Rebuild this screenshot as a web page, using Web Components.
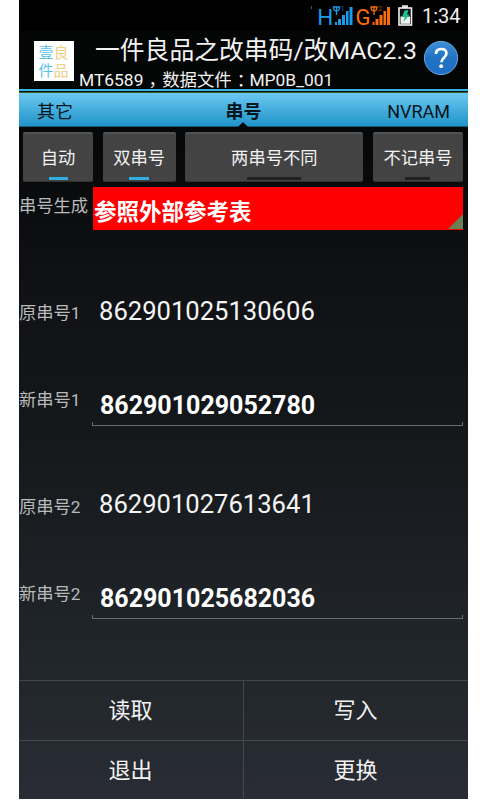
<!DOCTYPE html>
<html lang="zh-CN">
<head>
<meta charset="utf-8">
<title>一件良品之改串码</title>
<style>
html,body{margin:0;background:#fff}
body{width:480px;height:800px;overflow:hidden;font-family:Roboto,"Noto Sans CJK SC",sans-serif;color:#f2f2f2}
</style>
</head>
<body>
<phone-screen>
  <status-bar></status-bar>
  <app-header></app-header>
  <tab-strip></tab-strip>
  <toggle-row>
    <toggle-button on style="width:70px;--ind:19px">自动</toggle-button>
    <toggle-button on style="width:73px;--ind:20px">双串号</toggle-button>
    <toggle-button style="width:178px;--ind:54px">两串号不同</toggle-button>
    <toggle-button style="width:90px;--ind:25px">不记串号</toggle-button>
  </toggle-row>
  <serial-form>
    <field-label slot="labels" style="margin-top:9px">串号生成</field-label>
    <field-label slot="labels" style="margin-top:87px">原串号1</field-label>
    <field-label slot="labels" style="margin-top:67px">新串号1</field-label>
    <field-label slot="labels" style="margin-top:87px">原串号2</field-label>
    <field-label slot="labels" style="margin-top:67px">新串号2</field-label>
    <spinner-box>参照外部参考表</spinner-box>
    <serial-value style="margin-top:61px">862901025130606</serial-value>
    <serial-value edit style="margin-top:54px">862901029052780</serial-value>
    <serial-value style="margin-top:58px">862901027613641</serial-value>
    <serial-value edit style="margin-top:54px">862901025682036</serial-value>
  </serial-form>
  <action-grid>
    <action-button>读取</action-button><action-button>写入</action-button>
    <action-button>退出</action-button><action-button>更换</action-button>
  </action-grid>
</phone-screen>
<script>
const define = (name, html) => customElements.define(name, class extends HTMLElement {
  constructor() {
    super();
    this.attachShadow({ mode: 'open' }).innerHTML = html;
  }
});

define('phone-screen', `<style>
:host{display:flex;flex-direction:column;box-sizing:border-box;width:449px;height:799px;margin-left:19px;
background:linear-gradient(#000 0,#060708 127px,#101114 280px,#14181b 430px,#1c2024 560px,#22272b 680px,#292c35 799px)}
</style><slot></slot>`);

define('status-bar', `<style>
:host{display:flex;height:31px;background:#000;box-sizing:border-box;justify-content:flex-end;padding-right:8px}
svg{display:block;width:112px;height:31px;font-family:Roboto,sans-serif}
.clock{width:38px;font-size:20px;line-height:32px;color:#eee;text-align:right;white-space:nowrap}
</style>
<svg viewBox="309 0 112 31">
  <path d="M310.500 6v3" stroke="#555"/>
  <g fill="#1a9cec">
    <text x="316.300" y="25" font-size="22.500" textLength="15">H</text>
    <path d="M334 22h2v3h-2zM337 19h3v6h-3zM341 15h3v10h-3zM345 11h2.500v14h-2.500zM348.500 7h3v18h-3z"/>
    <path d="M332 7h7M332.500 7q0 4 3 4t3-4M335.500 7v8" fill="none" stroke="#1a9cec" stroke-width="1.300"/>
    <text x="339.800" y="10.500" font-size="6.500" opacity=".75">1</text>
  </g>
  <g fill="#fc6c0c">
    <text x="354.500" y="25" font-size="22" textLength="15">G</text>
    <path d="M371.500 22h2v3h-2zM374.500 19h3v6h-3zM378.500 15h3v10h-3zM382.500 11h2.500v14h-2.500zM386 7h3v18h-3z"/>
    <path d="M369.500 7h7M370 7q0 4 3 4t3-4M373 7v8" fill="none" stroke="#fc6c0c" stroke-width="1.300"/>
    <text x="377.300" y="10.500" font-size="6.500" opacity=".75">2</text>
  </g>
  <rect x="401" y="5.200" width="6" height="3" fill="#ddd"/>
  <rect x="398" y="8" width="12.500" height="17" fill="#111" stroke="#f0f0f0" stroke-width="1.600"/>
  <path d="M399.500 16.500h9.500v7.300h-9.500z" fill="#eee"/>
  <path d="M403.500 10.500l4-.5-1.500 4.500h2.500l-6 7.500 1.300-5.500h-2.500z" fill="#13c492"/>
</svg><div class="clock">1:34</div>`);

define('app-header', `<style>
:host{display:flex;box-sizing:border-box;height:58px;background:#040505;padding-left:15px}
.logo{box-sizing:border-box;width:40px;height:40px;margin:10px 0 0;padding:2px 1px 0 0;background:#fff;display:grid;grid-template-columns:15px 15px;grid-template-rows:18px 18px;justify-content:center;align-content:center;font-size:15px;line-height:18px}
.b{color:#5bbfe8}.y{color:#f5ce85}
.text{width:330px;margin-left:5px;white-space:nowrap}
.title{font-size:24.800px;line-height:29px;height:29px;padding:5px 0 0 16px}
.sub{font-size:17.400px;line-height:20px;height:20px;margin-top:4px}
.c{font-family:"Noto Sans CJK SC",sans-serif;font-feature-settings:"halt";padding:0 5px}
.p{font-family:"Noto Sans CJK SC",sans-serif;font-feature-settings:"halt";padding:0 4px 0 5px}
svg{width:36px;height:36px;margin:9px 0 0 14px;flex:none}
</style>
<div class="logo"><span class="b">壹</span><span class="y">良</span><span class="b">件</span><span class="y">品</span></div>
<div class="text"><div class="title">一件良品之改串码/改MAC2.3</div>
<div class="sub">MT6589<span class="c">，</span>数据文件<span class="p">：</span>MP0B_001</div></div>
<svg viewBox="0 0 36 36"><defs><linearGradient id="q" x2="0" y2="1"><stop stop-color="#3b8fd8"/><stop offset=".5" stop-color="#2272c4"/><stop offset="1" stop-color="#1e70c6"/></linearGradient></defs>
<circle cx="18" cy="18" r="16.600" fill="url(#q)" stroke="#68a9df" stroke-width="1"/>
<path d="M13 14q0-5 5.200-5t5.200 4.600c0 4-5 4.300-5 8.600" fill="none" stroke="#fff" stroke-width="2.700"/><circle cx="18.200" cy="26.200" r="1.900" fill="#fff"/></svg>`);

define('tab-strip', `<style>
:host{display:block;position:relative;height:38px;color:#07151c;font-size:18px;line-height:38px}
.lines{height:4px;background:linear-gradient(#36b5e5 0 2px,#071116 2px 3px,#3e6028 3px 4px)}
.bar{height:34px;background:linear-gradient(#6bc9f1,#2094c9);border-bottom:1px solid #135c7c;box-sizing:border-box;display:grid;grid-template-columns:1fr auto 1fr;padding:0 18px}
.bar span:last-child{text-align:right}
i{position:absolute;left:219px;bottom:0;border:5.500px solid transparent;border-top:0;border-bottom:5px solid #050607}
</style><div class="lines"></div><div class="bar"><span>其它</span><b>串号</b><span>NVRAM</span></div><i></i>`);

define('toggle-row', `<style>
:host{display:flex;justify-content:space-between;height:50px;padding:5px 5px 5px 4px;flex:none}
</style><slot></slot>`);

define('toggle-button', `<style>
:host{display:block;position:relative;box-sizing:border-box;height:50px;background:#434343;border-top:2px solid #505253;border-bottom:1px solid #303233;border-radius:2px;text-align:center;font-size:17.300px;line-height:49px;white-space:nowrap}
i{position:absolute;left:calc(50% - var(--ind)/2);bottom:1px;width:var(--ind);height:3px;background:#222}
:host([on]) i{background:#30afe2}
</style><slot></slot><i></i>`);

define('serial-form', `<style>
:host{display:flex;height:493px;flex:none}
.l{width:74px;display:flex;flex-direction:column}
.v{width:370px;display:flex;flex-direction:column}
</style><div class="l"><slot name="labels"></slot></div><div class="v"><slot></slot></div>`);

define('field-label', `<style>
:host{display:block;height:20px;line-height:20px;font-size:17.300px;color:#b9babb;white-space:nowrap}
</style><slot></slot>`);

define('spinner-box', `<style>
:host{display:block;position:relative;height:43px;background:#fe0000;color:#fff;font-weight:700;font-size:22.500px;line-height:51px;padding-left:1px;box-sizing:border-box;white-space:nowrap;flex:none}
i{position:absolute;right:0;bottom:1px;width:15px;height:15px;background:#6b7f56;clip-path:polygon(100% 0,100% 100%,0 100%)}
</style><slot></slot><i></i>`);

define('serial-value', `<style>
:host{display:block;box-sizing:border-box;height:40px;line-height:40px;font-size:25.600px;padding-left:6px;color:#f4f4f4;flex:none}
:host([edit]){position:relative;height:41px;line-height:42px;padding-left:7px;font-weight:700;font-size:25px;color:#fff}
i{display:none}
:host([edit]) i{display:block;position:absolute;left:-1px;right:0;bottom:0;height:4px;box-sizing:border-box;border:1px solid #666c70;border-top:0}
</style><slot></slot><i></i>`);

define('action-grid', `<style>
:host{display:grid;grid-template-columns:225px 224px;grid-template-rows:60px 59px;flex:none}
</style><slot></slot>`);

define('action-button', `<style>
:host{display:block;box-sizing:border-box;border-top:1px solid #43484c;text-align:center;font-size:22px;line-height:60px;padding-right:1px}
:host(:nth-child(odd)){border-right:1px solid #43484c;padding-right:1px}
</style><slot></slot>`);
</script>
</body>
</html>
